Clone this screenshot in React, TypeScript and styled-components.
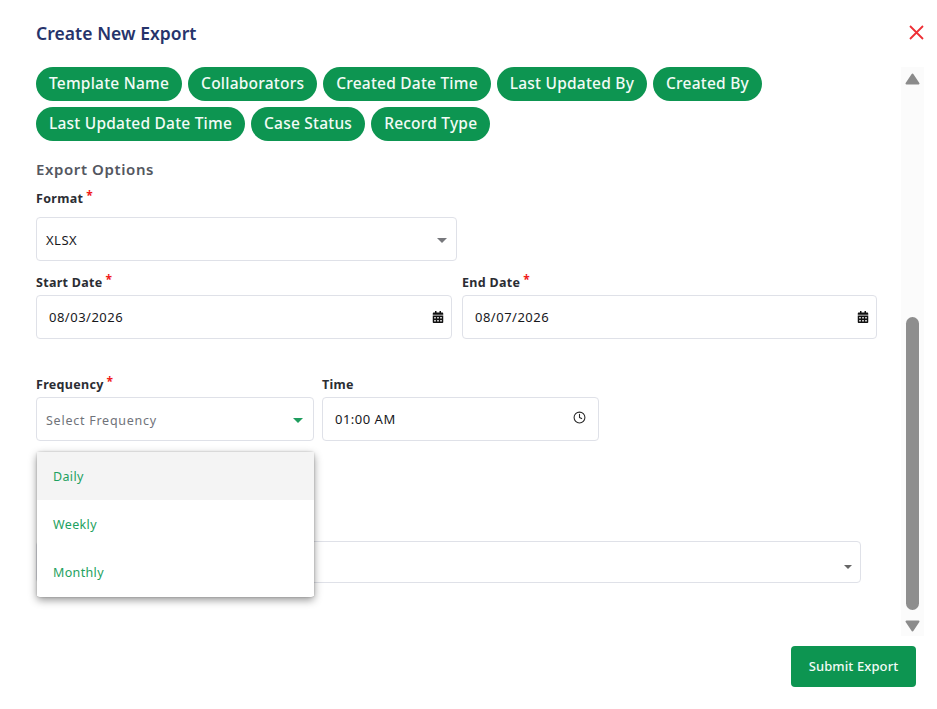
import React from "react";
import styled, { createGlobalStyle } from "styled-components";
import { FaCalendarAlt } from "react-icons/fa";
import { FiClock } from "react-icons/fi";

const GREEN = "#0d9551";
const BORDER = "#dfe1e8";
const FONT = `"Noto Sans", Roboto, sans-serif`;

const GlobalStyle = createGlobalStyle`
    html, body {
        margin: 0;
        padding: 0;
        background: #fff;
        font-family: ${FONT};
    }
    * {
        box-sizing: border-box;
    }
`;

const Page = styled.div`
    width: 937px;
    height: 709px;
    display: flex;
    flex-direction: column;
    overflow: hidden;
`;

const Header = styled.div`
    display: flex;
    justify-content: space-between;
    align-items: center;
    height: 67px;
    padding: 0 13px 2px 36px;
`;

const Title = styled.h2`
    margin: 0;
    font-size: 17.5px;
    font-weight: 600;
    letter-spacing: 0.05px;
    color: #26346b;
`;

const CloseButton = styled.svg`
    width: 15px;
    height: 15px;
    display: block;
    stroke: #ee2f36;
    stroke-width: 1.8;
`;

const Content = styled.div`
    display: flex;
    justify-content: space-between;
    height: 569px;
    padding: 0 13px 0 36px;
`;

const Form = styled.div`
    position: relative;
    width: 841px;
`;

const Chips = styled.div`
    display: flex;
    flex-wrap: wrap;
    gap: 6px;
    width: 760px;
`;

const Chip = styled.span`
    height: 34px;
    line-height: 33px;
    padding: 0 13px;
    border-radius: 17px;
    background: ${GREEN};
    color: #f2fbf6;
    font-size: 15.5px;
    font-weight: 500;
    letter-spacing: 0.22px;
    white-space: nowrap;
`;

const SectionTitle = styled.div`
    margin-top: 18px;
    height: 20px;
    line-height: 20px;
    font-size: 15px;
    font-weight: 600;
    letter-spacing: 0.6px;
    color: #54575f;
`;

const Label = styled.div<{ $mb?: number }>`
    height: 18px;
    line-height: 18px;
    font-size: 12.5px;
    font-weight: 700;
    letter-spacing: 0.3px;
    color: #2b2d33;
    margin-bottom: ${({ $mb }) => $mb ?? 3}px;
`;

const Star = styled.sup`
    color: #f01a1a;
    font-size: 12px;
    line-height: 0;
    margin-left: 3px;
    vertical-align: 3px;
`;

const FormatField = styled.div`
    width: 421px;
    margin-top: 11px;
`;

const Row = styled.div<{ $mt: number; $gap: number }>`
    display: flex;
    gap: ${({ $gap }) => $gap}px;
    margin-top: ${({ $mt }) => $mt}px;
`;

const Field = styled.div<{ $w: number }>`
    width: ${({ $w }) => $w}px;
`;

const Box = styled.div<{ $h?: number; $pl?: number; $pr?: number; $pt?: number }>`
    height: ${({ $h }) => $h ?? 44}px;
    display: flex;
    align-items: center;
    justify-content: space-between;
    padding: ${({ $pt }) => $pt ?? 0}px ${({ $pr }) => $pr ?? 12}px 0 ${({ $pl }) => $pl ?? 12}px;
    border: 1px solid ${BORDER};
    border-radius: 4px;
    background: #fff;
`;

const Value = styled.span`
    font-size: 13px;
    letter-spacing: 0.5px;
    color: #17181c;
`;

const Placeholder = styled.span`
    font-size: 12.5px;
    letter-spacing: 0.75px;
    color: #70737a;
`;

const Caret = styled.i<{ $color?: string; $size?: number }>`
    display: block;
    width: 0;
    height: 0;
    border-left: ${({ $size }) => $size ?? 5}px solid transparent;
    border-right: ${({ $size }) => $size ?? 5}px solid transparent;
    border-top: ${({ $size }) => $size ?? 5}px solid ${({ $color }) => $color ?? "#77787c"};
`;

const ClockIcon = styled(FiClock)`
    margin-bottom: 3px;
`;

const LastField = styled.div`
    width: 825px;
    margin-top: 100px;
`;

const Menu = styled.div`
    position: absolute;
    left: 1px;
    top: 385px;
    width: 277px;
    height: 145px;
    background: #fff;
    border-radius: 3px;
    box-shadow: 0 3px 8px rgba(0, 0, 0, 0.42), 0 0 2px rgba(0, 0, 0, 0.25);
`;

const MenuItem = styled.div<{ $active?: boolean }>`
    height: 48px;
    line-height: 50px;
    padding-left: 16px;
    font-size: 12.5px;
    letter-spacing: 0.35px;
    color: #1ea160;
    background: ${({ $active }) => ($active ? "#f4f4f4" : "#fff")};
`;

const ScrollTrack = styled.div`
    width: 23px;
    height: 569px;
    background: #fbfbfb;
    display: flex;
    flex-direction: column;
    align-items: center;
    padding: 6px 0 4px;
`;

const ScrollArrow = styled.svg`
    display: block;
    width: 15px;
    height: 12px;
    fill: #8b8b8b;
    stroke: #8b8b8b;
    stroke-width: 2;
    stroke-linejoin: round;
`;

const ScrollThumb = styled.div`
    width: 13px;
    height: 293px;
    margin-top: auto;
    margin-bottom: 10px;
    border-radius: 7px;
    background: #8e8e8e;
`;

const Footer = styled.div`
    display: flex;
    justify-content: flex-end;
    padding: 10px 21px 0 0;
`;

const SubmitButton = styled.button`
    width: 125px;
    height: 41px;
    padding: 0 0 2px;
    border: none;
    border-radius: 4px;
    background: ${GREEN};
    color: #f2fbf6;
    font-family: ${FONT};
    font-size: 13px;
    font-weight: 500;
    letter-spacing: 0.1px;
`;

const chipRows = [
    "Template Name",
    "Collaborators",
    "Created Date Time",
    "Last Updated By",
    "Created By",
    "Last Updated Date Time",
    "Case Status",
    "Record Type"
];

const App: React.FC = () => {
    return (
        <Page>
            <GlobalStyle />
            <Header>
                <Title>Create New Export</Title>
                <CloseButton viewBox="0 0 15 15">
                    <path d="M1 1l13 13M14 1L1 14" />
                </CloseButton>
            </Header>
            <Content>
                <Form>
                    <Chips>
                        {chipRows.map((chip) => (
                            <Chip key={chip}>{chip}</Chip>
                        ))}
                    </Chips>
                    <SectionTitle>Export Options</SectionTitle>
                    <FormatField>
                        <Label $mb={9}>
                            Format<Star>*</Star>
                        </Label>
                        <Box $pl={9} $pr={9} $pt={2}>
                            <Value>XLSX</Value>
                            <Caret />
                        </Box>
                    </FormatField>
                    <Row $mt={13} $gap={10}>
                        <Field $w={416}>
                            <Label>
                                Start Date<Star>*</Star>
                            </Label>
                            <Box $pr={7}>
                                <Value>08/03/2026</Value>
                                <FaCalendarAlt size={12} color="#111" />
                            </Box>
                        </Field>
                        <Field $w={415}>
                            <Label>
                                End Date<Star>*</Star>
                            </Label>
                            <Box $pr={7}>
                                <Value>08/07/2026</Value>
                                <FaCalendarAlt size={12} color="#111" />
                            </Box>
                        </Field>
                    </Row>
                    <Row $mt={37} $gap={8}>
                        <Field $w={278}>
                            <Label>
                                Frequency<Star>*</Star>
                            </Label>
                            <Box $pl={9} $pr={10} $pt={2}>
                                <Placeholder>Select Frequency</Placeholder>
                                <Caret $color="#1f9d5e" />
                            </Box>
                        </Field>
                        <Field $w={277}>
                            <Label>Time</Label>
                            <Box>
                                <Value>01:00 AM</Value>
                                <ClockIcon size={13} color="#2b2b2b" />
                            </Box>
                        </Field>
                    </Row>
                    <LastField>
                        <Box $h={42} $pr={8} $pt={10}>
                            <span />
                            <Caret $size={4} $color="#666" />
                        </Box>
                    </LastField>
                    <Menu>
                        <MenuItem $active>Daily</MenuItem>
                        <MenuItem>Weekly</MenuItem>
                        <MenuItem>Monthly</MenuItem>
                    </Menu>
                </Form>
                <ScrollTrack>
                    <ScrollArrow viewBox="0 0 15 12">
                        <path d="M7.5 1.5L13.5 10.5H1.5Z" />
                    </ScrollArrow>
                    <ScrollThumb />
                    <ScrollArrow viewBox="0 0 15 12">
                        <path d="M1.5 1.5H13.5L7.5 10.5Z" />
                    </ScrollArrow>
                </ScrollTrack>
            </Content>
            <Footer>
                <SubmitButton>Submit Export</SubmitButton>
            </Footer>
        </Page>
    );
};

export default App;
